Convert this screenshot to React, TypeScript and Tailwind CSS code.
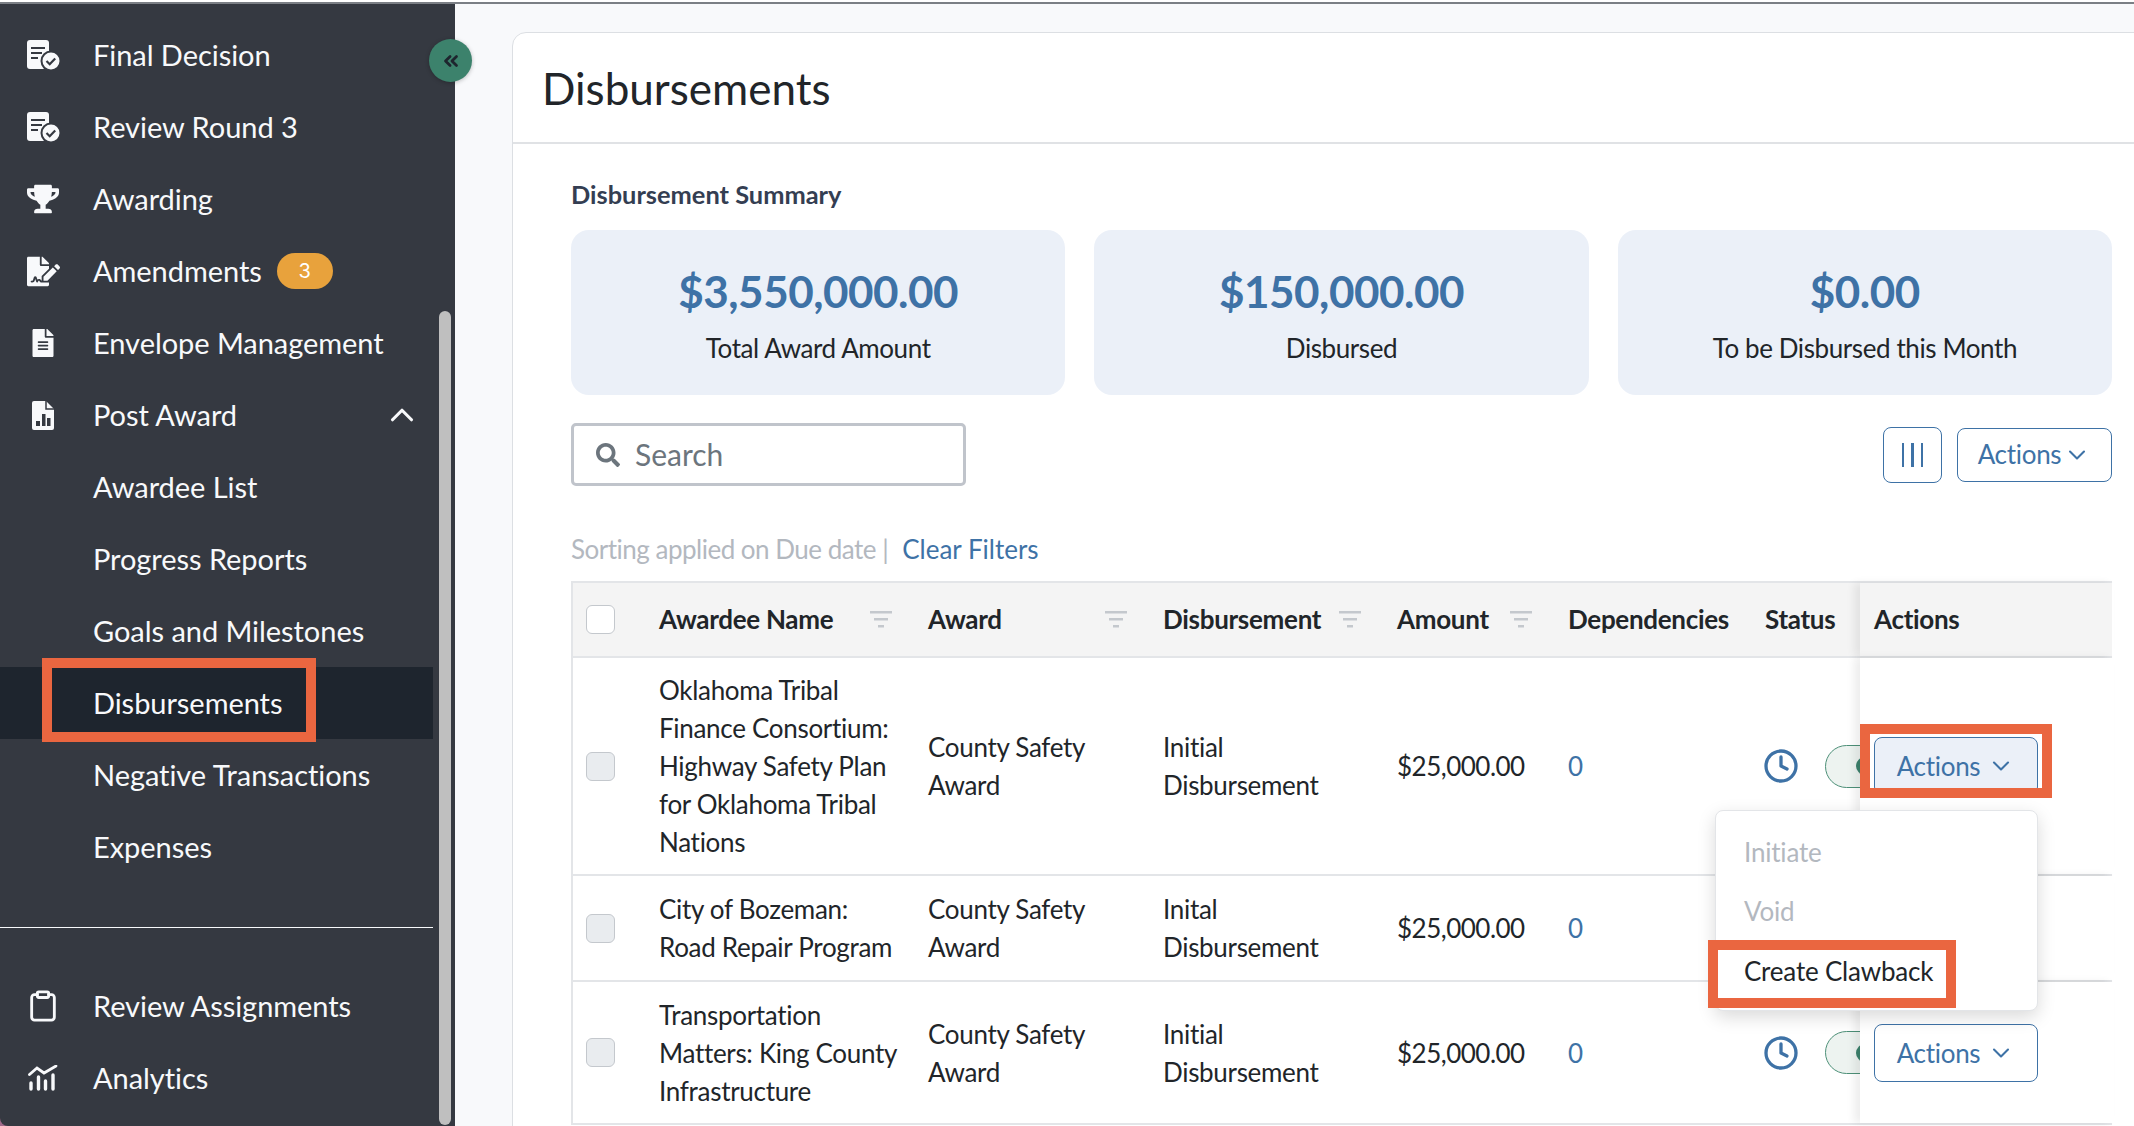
import React from "react";
import { FaTrophy, FaFileSignature, FaFileAlt, FaSearch } from "react-icons/fa";
import { ChevronDown, ChevronUp, ChevronsLeft, Clock, Clipboard } from "lucide-react";

const COLS = "grid grid-cols-[71px_269px_235px_234px_171px_197px_110px_254px]";

function DocCheck() {
  return (
    <svg width="33" height="30" viewBox="0 0 33 30" className="block">
      <rect x="0" y="0" width="22" height="29" rx="3" fill="#f8f9fb" />
      <rect x="4" y="7" width="14" height="2" fill="#353941" />
      <rect x="4" y="12" width="11" height="2" fill="#353941" />
      <rect x="4" y="17" width="7" height="2" fill="#353941" />
      <circle cx="24" cy="21" r="9.500" fill="#f8f9fb" stroke="#353941" strokeWidth="2" />
      <path d="M19.500 21l3.200 3.200 5.500-5.800" fill="none" stroke="#353941" strokeWidth="2.200" />
    </svg>
  );
}

function DocChart() {
  return (
    <svg width="22" height="29" viewBox="0 0 22 29" className="block">
      <path d="M2 0h12l8 8v19a2 2 0 0 1-2 2H2a2 2 0 0 1-2-2V2a2 2 0 0 1 2-2z" fill="#f8f9fb" />
      <path d="M14 0v8h8" fill="none" stroke="#353941" strokeWidth="1.500" />
      <rect x="4" y="20" width="4" height="5" fill="#353941" />
      <rect x="10" y="13" width="3.500" height="12" fill="#353941" />
      <rect x="15" y="17" width="3.500" height="8" fill="#353941" />
    </svg>
  );
}

function ChartLine() {
  return (
    <svg width="30" height="26" viewBox="0 0 30 26" className="block" fill="none" stroke="#f8f9fb" strokeLinecap="round">
      <path d="M1.500 9.500 L9 3 L16 8 L28 1" strokeWidth="2.800" />
      <path d="M3 18v6M10.500 12v12M17.500 16v8M25 10v14" strokeWidth="3.400" />
    </svg>
  );
}

function FilterIcon() {
  return (
    <svg width="22" height="18" viewBox="0 0 22 18" className="block" fill="#c4c8cd">
      <rect x="0" y="0" width="22" height="2.500" />
      <rect x="4" y="7" width="14" height="2.500" />
      <rect x="8" y="14" width="6" height="2.500" />
    </svg>
  );
}

function NavRow({ icon, label, active, badge, chevron }: { icon?: React.ReactNode; label: string; active?: boolean; badge?: string; chevron?: boolean }) {
  return (
    <div className={`flex h-[72px] w-[433px] items-center ${active ? "bg-[#1e252e]" : ""}`}>
      <div className="flex w-[93px] shrink-0 justify-center pr-[7px]">{icon}</div>
      <span className="mb-[2px] text-[29px] leading-none tracking-[-0.05px] text-[#f8f9fb]">{label}</span>
      {badge && (
        <span className="ml-[15px] flex h-[36px] w-[56px] items-center justify-center rounded-full bg-[#e8a23c] font-[Inter] text-[20px] text-white">
          {badge}
        </span>
      )}
      {chevron && <ChevronUp className="ml-auto mr-[12px] text-[#f8f9fb]" size={38} strokeWidth={2} />}
    </div>
  );
}

function Stat({ value, label }: { value: string; label: string }) {
  return (
    <div className="flex h-[165px] flex-col items-center rounded-[18px] bg-[#ebf0f8] pt-[34px]">
      <div className="text-[44px] font-bold leading-[54px] tracking-[-0.5px] text-[#3e72a6]">{value}</div>
      <div className="mt-[14px] text-[26px] leading-[32px] tracking-[-0.4px] text-[#212529]">{label}</div>
    </div>
  );
}

function ActionButton({ selected }: { selected?: boolean }) {
  return (
    <button className={`flex h-[58px] w-[164px] items-center justify-center gap-[7px] rounded-[8px] border border-[#3e72a6] text-[26px] tracking-[-0.3px] text-[#3e72a6] ${selected ? "bg-[#ebf0f8]" : "bg-white"}`}>
      Actions
      <ChevronDown size={28} strokeWidth={1.800} />
    </button>
  );
}

function Row({ height, name, line1 }: { height: string; name: string[]; line1: string }) {
  return (
    <div className={`${COLS} ${height} border-b-2 border-[#e3e5e8] text-[26px] leading-[38px] tracking-[-0.3px] text-[#212529]`}>
      <div className="flex items-center pl-[13px]">
        <span className="h-[29px] w-[29px] rounded-[6px] border border-[#c4c8cd] bg-[#e9ecef]" />
      </div>
      <div className="flex flex-col justify-center pl-[15px]">
        {name.map((n) => (
          <div key={n} className="whitespace-nowrap">{n}</div>
        ))}
      </div>
      <div className="flex flex-col justify-center pl-[15px]">
        <div>County Safety</div>
        <div>Award</div>
      </div>
      <div className="flex flex-col justify-center pl-[15px]">
        <div>{line1}</div>
        <div>Disbursement</div>
      </div>
      <div className="flex items-center pl-[15px] tracking-[-0.5px]">$25,000.00</div>
      <div className="flex items-center pl-[15px] text-[#3e72a6]">0</div>
      <div className="flex items-center gap-[26px] overflow-hidden pl-[13px]">
        <Clock size={36} strokeWidth={2.200} className="shrink-0 text-[#3e72a6]" />
        <span className="flex h-[43px] w-[100px] shrink-0 items-center rounded-full border border-[#4d9078] bg-[#edf3f0] pl-[30px]">
          <span className="h-[18px] w-[18px] shrink-0 rounded-full bg-[#3c826c]" />
        </span>
      </div>
      <div className="relative flex items-center bg-white pl-[14px] shadow-[-6px_0_8px_rgba(0,0,0,0.07)]">
        <ActionButton selected={name[0].startsWith("Oklahoma")} />
      </div>
    </div>
  );
}

export default function App() {
  return (
    <div className="relative flex h-[1126px] w-[2134px] flex-col overflow-hidden bg-[#a06a8a] font-[Lato,sans-serif]">
      <div className="h-[4px] shrink-0 border-b-[2px] border-[#7b7f85] bg-white" />
      <div className="flex min-h-0 flex-1">
        <aside className="relative h-full w-[455px] shrink-0 rounded-bl-[8px] bg-[#353941] pt-[15px]">
          <NavRow icon={<DocCheck />} label="Final Decision" />
          <NavRow icon={<DocCheck />} label="Review Round 3" />
          <NavRow icon={<FaTrophy size={32} color="#f8f9fb" />} label="Awarding" />
          <NavRow icon={<FaFileSignature size={33} color="#f8f9fb" />} label="Amendments" badge="3" />
          <NavRow icon={<FaFileAlt size={28} color="#f8f9fb" />} label="Envelope Management" />
          <NavRow icon={<DocChart />} label="Post Award" chevron />
          <NavRow label="Awardee List" />
          <NavRow label="Progress Reports" />
          <NavRow label="Goals and Milestones" />
          <NavRow label="Disbursements" active />
          <NavRow label="Negative Transactions" />
          <NavRow label="Expenses" />
          <div className="mt-[44px] h-[1px] w-[433px] bg-[#f8f9fb]" />
          <div className="mt-[42px]">
            <NavRow icon={<Clipboard size={34} color="#f8f9fb" strokeWidth={2} />} label="Review Assignments" />
            <NavRow icon={<ChartLine />} label="Analytics" />
          </div>
          <div className="absolute bottom-[1px] left-[439px] top-[307px] w-[12px] rounded-full bg-[#bfbfbf]" />
        </aside>
        <main className="min-w-0 flex-1 overflow-hidden bg-[#f8f9fb] pl-[57px] pt-[28px]">
          <div className="h-[1200px] w-[1700px] rounded-tl-[14px] border border-[#dcdfe3] bg-white">
            <div className="flex h-[111px] items-center border-b-2 border-[#e0e2e5] pl-[29px]">
              <h1 className="text-[44px] leading-none text-[#212529]">Disbursements</h1>
            </div>
            <div className="w-[1599px] pl-[58px]">
              <h2 className="mt-[35px] text-[25.400px] font-bold leading-[30px] text-[#343e52]">Disbursement Summary</h2>
              <div className="mt-[21px] grid grid-cols-3 gap-[29px]">
                <Stat value="$3,550,000.00" label="Total Award Amount" />
                <Stat value="$150,000.00" label="Disbursed" />
                <Stat value="$0.00" label="To be Disbursed this Month" />
              </div>
              <div className="mt-[28px] flex items-center justify-between">
                <div className="flex h-[63px] w-[395px] items-center gap-[15px] rounded-[5px] border-[3px] border-[#c0c4cb] pl-[22px] text-[30px] text-[#6c757d]">
                  <FaSearch size={24} className="text-[#6c757d]" />
                  Search
                </div>
                <div className="flex items-center gap-[15px]">
                  <div className="flex h-[56px] w-[59px] items-center justify-center gap-[7px] rounded-[8px] border border-[#3e72a6]">
                    <span className="h-[24px] w-[2.500px] bg-[#3e72a6]" />
                    <span className="h-[24px] w-[2.500px] bg-[#3e72a6]" />
                    <span className="h-[24px] w-[2.500px] bg-[#3e72a6]" />
                  </div>
                  <button className="flex h-[54px] w-[155px] items-center justify-center gap-[2px] rounded-[8px] border border-[#3e72a6] text-[26px] tracking-[-0.3px] text-[#3e72a6]">
                    Actions
                    <ChevronDown size={28} strokeWidth={1.800} />
                  </button>
                </div>
              </div>
              <div className="mt-[46px] flex h-[34px] items-center text-[26px]">
                <span className="tracking-[-0.5px] text-[#b3b8bf]">Sorting applied on Due date |</span>
                <span className="ml-[14px] text-[#3e72a6]">Clear Filters</span>
              </div>
              <div className="mt-[15px] w-[1541px] border-l-2 border-[#e3e5e8]">
                <div className={`${COLS} h-[77px] border-y-2 border-[#e3e5e8] bg-[#f4f4f4] text-[26px] font-bold tracking-[-0.3px] text-[#212529]`}>
                  <div className="flex items-center pl-[13px]">
                    <span className="h-[29px] w-[29px] rounded-[6px] border border-[#c4c8cd] bg-white" />
                  </div>
                  <div className="flex items-center justify-between pl-[15px] pr-[21px]">Awardee Name<FilterIcon /></div>
                  <div className="flex items-center justify-between pl-[15px] pr-[21px]">Award<FilterIcon /></div>
                  <div className="flex items-center justify-between pl-[15px] pr-[21px]">Disbursement<FilterIcon /></div>
                  <div className="flex items-center justify-between pl-[15px] pr-[21px]">Amount<FilterIcon /></div>
                  <div className="flex items-center pl-[15px]">Dependencies</div>
                  <div className="flex items-center pl-[15px]">Status</div>
                  <div className="relative flex items-center pl-[14px] shadow-[-6px_0_8px_rgba(0,0,0,0.07)]">Actions</div>
                </div>
                <Row height="h-[218px]" name={["Oklahoma Tribal", "Finance Consortium:", "Highway Safety Plan", "for Oklahoma Tribal", "Nations"]} line1="Initial" />
                <Row height="h-[106px]" name={["City of Bozeman:", "Road Repair Program"]} line1="Inital" />
                <Row height="h-[143px]" name={["Transportation", "Matters: King County", "Infrastructure"]} line1="Initial" />
              </div>
            </div>
          </div>
        </main>
      </div>

      <div className="absolute left-[429px] top-[39px] flex h-[43px] w-[43px] items-center justify-center rounded-full bg-[#3c826c] shadow-[0_1px_4px_rgba(0,0,0,0.25)]">
        <ChevronsLeft size={22} strokeWidth={3} className="text-[#1e252e]" />
      </div>

      <div className="absolute left-[42px] top-[658px] h-[84px] w-[274px] border-[10px] border-[#ea6640]" />

      <div className="absolute left-[1715px] top-[810px] flex h-[201px] w-[323px] flex-col rounded-[8px] border border-[#e3e5e8] bg-white pl-[28px] text-[26px] tracking-[-0.2px] shadow-[0_6px_18px_rgba(0,0,0,0.15)]">
        <div className="mt-[22px] leading-[38px] text-[#b3b8bf]">Initiate</div>
        <div className="mt-[21px] leading-[38px] text-[#b3b8bf]">Void</div>
        <div className="mt-[22px] leading-[38px] text-[#212529]">Create Clawback</div>
      </div>

      <div className="absolute left-[1860px] top-[724px] h-[74px] w-[192px] border-[10px] border-[#ea6640]" />
      <div className="absolute left-[1708px] top-[940px] h-[68px] w-[248px] border-[10px] border-[#ea6640]" />
    </div>
  );
}
